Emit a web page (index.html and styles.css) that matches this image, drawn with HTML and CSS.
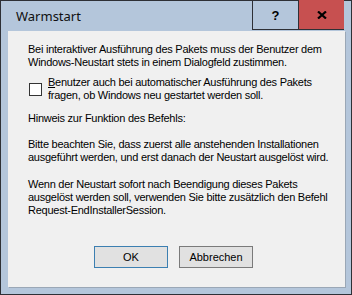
FILE: index.html
```html
<!DOCTYPE html>
<html lang="de">
<head>
  <meta charset="UTF-8">
  <title>Warmstart</title>
  <link rel="stylesheet" href="styles.css">
</head>
<body>
  <div class="window">
    <div class="titlebar">
      <span class="title">Warmstart</span>
      <div class="caption-buttons">
        <div class="cap-btn help">?</div>
        <div class="cap-btn close">
          <svg width="10" height="8" viewBox="0 0 10 8">
            <path d="M1 0.5 L9 7.5 M9 0.5 L1 7.5" stroke="#000" stroke-width="2.2"/>
          </svg>
        </div>
      </div>
    </div>

    <div class="client">
      <p class="text first">Bei interaktiver Ausführung des Pakets muss der Benutzer dem<br>Windows-Neustart stets in einem Dialogfeld zustimmen.</p>

      <label class="check">
        <span class="box"></span>
        <span class="check-label"><span class="accel">B</span>enutzer auch bei automatischer Ausführung des Pakets<br>fragen, ob Windows neu gestartet werden soll.</span>
      </label>

      <p class="text hint">Hinweis zur Funktion des Befehls:</p>

      <p class="text note">Bitte beachten Sie, dass zuerst alle anstehenden Installationen<br>ausgeführt werden, und erst danach der Neustart ausgelöst wird.</p>

      <p class="text note2">Wenn der Neustart sofort nach Beendigung dieses Pakets<br>ausgelöst werden soll, verwenden Sie bitte zusätzlich den Befehl<br>Request-EndInstallerSession.</p>

      <div class="buttons">
        <button class="btn default">OK</button>
        <button class="btn">Abbrechen</button>
      </div>
    </div>
  </div>
</body>
</html>
```

FILE: styles.css
```css
html, body {
  margin: 0;
  padding: 0;
}
body {
  font-family: "Liberation Sans", Arial, sans-serif;
  font-size: 11px;
  color: #000;
  background: #fff;
}

.window {
  width: 352px;
  height: 295px;
  box-sizing: border-box;
  border: 1px solid #2e3036;
  background: #b4c6db;
  display: flex;
  flex-direction: column;
}

.titlebar {
  height: 30px;
  display: flex;
  align-items: flex-start;
  justify-content: space-between;
}
.title {
  font-family: "Noto Sans", "Open Sans", sans-serif;
  font-size: 13px;
  line-height: 30px;
  padding-left: 15px;
  color: #101010;
}
.caption-buttons {
  display: flex;
  margin-right: 7px;
  margin-top: -1px;
}
.cap-btn {
  height: 30px;
  box-sizing: border-box;
  border-bottom: 1px solid #2e3036;
  display: flex;
  align-items: center;
  justify-content: center;
}
.cap-btn.help {
  width: 47px;
  border-left: 1px solid #2e3036;
  border-right: 1px solid #2e3036;
  font-family: "Liberation Sans", Arial, sans-serif;
  font-weight: bold;
  font-size: 13px;
  padding-top: 1px;
}
.cap-btn.close {
  width: 45px;
  background: #c75050;
  padding-top: 1px;
}

.client {
  height: 256px;
  margin: 0 6px 0 7px;
  background: #f0f0f0;
  box-shadow: 1px 1px 0 #9aa7b6;
  padding: 12px 0 0 20px;
  box-sizing: border-box;
}

.text {
  margin: 0;
  line-height: 13px;
  white-space: nowrap;
  letter-spacing: -0.25px;
}
.check {
  display: flex;
  align-items: center;
  margin-top: 7px;
  line-height: 13px;
}
.box {
  width: 13px;
  height: 13px;
  box-sizing: border-box;
  border: 1px solid #333;
  background: #fff;
  flex-shrink: 0;
  margin: 0 6px 0 1px;
}
.check-label {
  white-space: nowrap;
  letter-spacing: -0.25px;
}
.accel {
  text-decoration: underline;
}
.hint {
  margin-top: 10px;
}
.note {
  margin-top: 13px;
}
.note2 {
  margin-top: 14px;
}

.buttons {
  display: flex;
  gap: 11px;
  margin: 29px 0 0 66px;
}
.btn {
  width: 74px;
  height: 22px;
  box-sizing: border-box;
  background: #e1e1e1;
  border: 1px solid #7a7a7a;
  font-family: "Liberation Sans", Arial, sans-serif;
  font-size: 11px;
  color: #000;
  padding: 0;
}
.btn.default {
  border-color: #3c7fb1;
}
```
